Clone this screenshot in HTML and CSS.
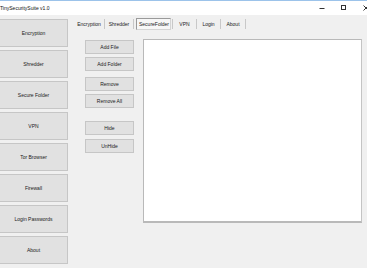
FILE: index.html
```html
<!DOCTYPE html>
<html>
<head>
<meta charset="utf-8">
<link rel="stylesheet" href="styles.css">
</head>
<body>
<div class="window">
  <div class="titlebar">
    <span class="title">TinySecuritySuite v1.0</span>
    <div class="controls">
      <span class="ctl"><svg width="22" height="14" viewBox="0 0 22 14"><line x1="8.5" y1="7.5" x2="13.5" y2="7.5" stroke="#333" stroke-width="1"/></svg></span>
      <span class="ctl"><svg width="22" height="14" viewBox="0 0 22 14"><rect x="8.5" y="4.5" width="4" height="4" fill="none" stroke="#333" stroke-width="1"/></svg></span>
      <span class="ctl"><svg width="22" height="14" viewBox="0 0 22 14"><path d="M8.5 4.5 L13.5 9.5 M13.5 4.5 L8.5 9.5" stroke="#333" stroke-width="1"/></svg></span>
    </div>
  </div>
  <div class="client">
    <nav class="sidebar">
      <button class="side-btn">Encryption</button>
      <button class="side-btn">Shredder</button>
      <button class="side-btn">Secure Folder</button>
      <button class="side-btn">VPN</button>
      <button class="side-btn">Tor Browser</button>
      <button class="side-btn">Firewall</button>
      <button class="side-btn">Login Passwords</button>
      <button class="side-btn">About</button>
    </nav>
    <div class="tabs">
      <div class="tabstrip">
        <span class="tab tab-enc">Encryption</span><span class="sep"></span>
        <span class="tab tab-shr">Shredder</span><span class="sep"></span>
        <span class="tab tab-sel">SecureFolder</span><span class="sep"></span>
        <span class="tab tab-vpn">VPN</span><span class="sep"></span>
        <span class="tab tab-login">Login</span><span class="sep"></span>
        <span class="tab tab-about">About</span><span class="sep"></span>
      </div>
      <div class="tabpage">
        <div class="actions">
          <div class="group">
            <button class="act-btn">Add File</button>
            <button class="act-btn">Add Folder</button>
          </div>
          <div class="group group-2">
            <button class="act-btn">Remove</button>
            <button class="act-btn">Remove All</button>
          </div>
          <div class="group group-3">
            <button class="act-btn">Hide</button>
            <button class="act-btn">UnHide</button>
          </div>
        </div>
        <div class="listbox"></div>
      </div>
    </div>
  </div>
  <div class="bottom"></div>
</div>
</body>
</html>
```
FILE: styles.css
```css
* { box-sizing: border-box; }
html, body { margin: 0; padding: 0; }
body {
  width: 367px;
  height: 274px;
  overflow: hidden;
  background: #ffffff;
  font-family: "Liberation Sans", Arial, sans-serif;
  font-size: 5px;
  color: #1a1a1a;
}
.window { width: 367px; height: 274px; display: flex; flex-direction: column; }
.titlebar {
  height: 15px;
  flex: none;
  background: #ffffff;
  border-top: 1px solid #9cc3ea;
  display: flex;
  align-items: center;
  justify-content: space-between;
}
.title { font-size: 5px; margin-left: 0; color: #111; }
.controls { display: flex; margin-right: -10px; }
.ctl { display: block; width: 22px; height: 14px; }
.ctl svg { display: block; }
.client {
  height: 253px;
  flex: none;
  background: #f0f0f0;
  display: flex;
}
.bottom { flex: 1; background: #ffffff; }
.sidebar {
  width: 68px;
  flex: none;
  padding-top: 4px;
  display: flex;
  flex-direction: column;
  gap: 3px;
  margin-left: -1px;
}
button {
  font-family: "Liberation Sans", Arial, sans-serif;
  font-size: 5px;
  color: #1a1a1a;
  background: #e1e1e1;
  border: 1px solid #c6c6c6;
  padding: 0;
  margin: 0;
  border-radius: 0;
}
.side-btn { width: 69px; height: 28px; }
.tabs { margin-left: 8px; padding-top: 3px; flex: 1; }
.tabstrip { height: 12px; display: flex; align-items: center; }
.tab {
  height: 12px;
  line-height: 12px;
  text-align: center;
  padding: 0 2px;
}
.tab-enc { width: 28px; }
.tab-shr { width: 26px; }
.tab-sel {
  width: 35px;
  background: #f7f7f7;
  border: 1px solid #9a9a9a;
  border-right-color: #d4d4d4;
  border-bottom-color: #d4d4d4;
  line-height: 10px;
  margin-left: 1px;
}
.tab-vpn { width: 21px; }
.tab-login { width: 21px; }
.tab-about { width: 22px; }
.sep {
  width: 1px;
  height: 10px;
  background: #c8c8c8;
  margin: 0 1px;
}
.tabpage { display: flex; padding-top: 9px; padding-left: 10px; }
.actions { width: 49px; margin-top: 1px; display: flex; flex-direction: column; }
.group { display: flex; flex-direction: column; gap: 3px; }
.group-2 { margin-top: 6px; }
.group-3 { margin-top: 13px; gap: 4px; }
.act-btn { width: 49px; height: 14px; }
.listbox {
  margin-left: 9px;
  width: 219px;
  height: 184px;
  background: #ffffff;
  border: 1px solid #b9b9b9;
  border-bottom-width: 2px;
  border-right-color: #c4c4c4;
}
```
